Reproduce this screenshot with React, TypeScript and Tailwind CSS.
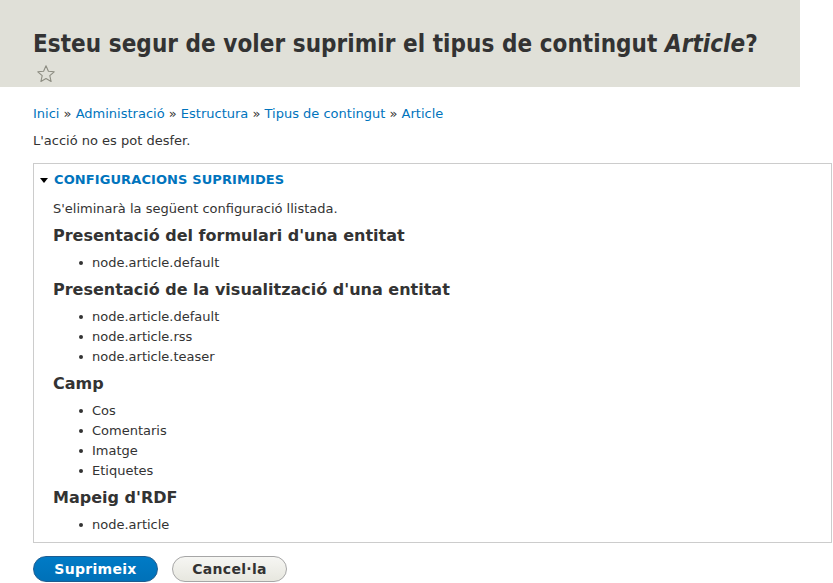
import { useState } from "react";

type Group = { title: string; items: string[] };

const groups: Group[] = [
  { title: "Presentació del formulari d'una entitat", items: ["node.article.default"] },
  {
    title: "Presentació de la visualització d'una entitat",
    items: ["node.article.default", "node.article.rss", "node.article.teaser"],
  },
  { title: "Camp", items: ["Cos", "Comentaris", "Imatge", "Etiquetes"] },
  { title: "Mapeig d'RDF", items: ["node.article"] },
];

const crumbs = ["Inici", "Administració", "Estructura", "Tipus de contingut", "Article"];

function Star() {
  return (
    <svg width="20" height="20" viewBox="0 0 20 20" className="block">
      <path
        d="M10 1.8l2.4 5.4 5.8.6-4.4 3.9 1.3 5.8L10 14.5l-5.1 3 1.3-5.8-4.4-3.9 5.8-.6z"
        fill="none"
        stroke="#8d8d82"
        strokeWidth="1.1"
        strokeLinejoin="round"
      />
    </svg>
  );
}

export default function App() {
  const [open, setOpen] = useState(true);

  return (
    <div className="min-h-[583px] bg-white text-[13px] text-[#333] font-['DejaVu_Sans',sans-serif]">
      <div className="w-[800px] bg-[#e0e0d8] px-[33px] pt-[29px] h-[87px]">
        <h1 className="text-[24px] leading-[30px] font-bold text-[#333] tracking-[0.05px] font-['DejaVu_Sans_Condensed','DejaVu_Sans',sans-serif]">
          Esteu segur de voler suprimir el tipus de contingut <em>Article</em>?
        </h1>
        <div className="mt-[5px] ml-[3px]">
          <Star />
        </div>
      </div>

      <div className="pl-[33px] pr-px">
        <div className="mt-[18px] leading-[18px] text-[#0074bd]">
          {crumbs.map((c, i) => (
            <span key={c}>
              {i > 0 && <span className="text-[#333]"> » </span>}
              <a href="#" className="text-[#0074bd]">{c}</a>
            </span>
          ))}
        </div>
        <p className="mt-[9px] leading-[18px]">L'acció no es pot desfer.</p>

        <div className="mt-[13px] border border-[#ccc]">
          <button
            onClick={() => setOpen(!open)}
            className="flex items-center gap-[6px] pl-[6px] pt-[7px] pb-[5px] text-[#0074bd] font-bold uppercase tracking-[0.1px] leading-[18px]"
          >
            <span className="w-0 h-0 border-l-[4px] border-r-[4px] border-t-[5px] border-l-transparent border-r-transparent border-t-black" />
            Configuracions suprimides
          </button>
          {open && (
            <div className="pl-[19px] pb-[7px]">
              <p className="mt-[5px] leading-[20px]">S'eliminarà la següent configuració llistada.</p>
              {groups.map((g) => (
                <div key={g.title}>
                  <h3 className="text-[16px] font-bold leading-[20px] mt-[7px] mb-[7px]">{g.title}</h3>
                  <ul className="pl-[26px]">
                    {g.items.map((it) => (
                      <li key={it} className="flex items-center leading-[20px]">
                        <span className="w-[4px] h-[4px] rounded-full bg-[#333] mr-[9px]" />
                        {it}
                      </li>
                    ))}
                  </ul>
                </div>
              ))}
            </div>
          )}
        </div>

        <div className="flex gap-[14px] mt-[13px]">
          <button className="h-[26px] w-[125px] rounded-full border border-[#1e5c90] bg-gradient-to-b from-[#007bc6] to-[#0071b8] text-white font-bold text-[14px] tracking-[0.3px]">
            Suprimeix
          </button>
          <button className="h-[26px] w-[115px] rounded-full border border-[#a6a6a6] bg-gradient-to-b from-[#f6f6f3] to-[#e7e7df] text-[#333] font-bold text-[14px] tracking-[0.3px]">
            Cancel·la
          </button>
        </div>
      </div>
    </div>
  );
}
